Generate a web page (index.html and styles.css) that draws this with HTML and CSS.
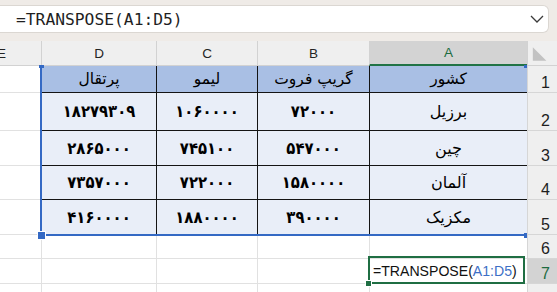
FILE: index.html
```html
<!DOCTYPE html>
<html lang="fa">
<head>
<meta charset="utf-8">
<link rel="stylesheet" href="styles.css">
</head>
<body>
<div class="fbar">
  <div class="fbox">
    <span class="ftext">=TRANSPOSE(A1:D5)</span>
    <svg class="chev" width="14" height="8" viewBox="0 0 14 8"><path d="M1 1 L7 7 L13 1" fill="none" stroke="#3a3a3a" stroke-width="1.3"/></svg>
  </div>
</div>
<div class="sheet">
  <div class="c h corner"><svg width="30" height="25" viewBox="0 0 30 25"><polygon points="5,6 5,20 19,20" fill="#c2c2c2"/></svg></div>
  <div class="c h sel">A</div>
  <div class="c h">B</div>
  <div class="c h">C</div>
  <div class="c h">D</div>
  <div class="c h e"><span class="elet">E</span></div>

  <div class="c r">1</div>
  <div class="c t th">کشور</div>
  <div class="c t th">گریپ فروت</div>
  <div class="c t th">لیمو</div>
  <div class="c t th">پرتقال</div>
  <div class="c e"></div>

  <div class="c r">2</div>
  <div class="c t w">برزیل</div>
  <div class="c t n">۷۲۰۰۰</div>
  <div class="c t n">۱۰۶۰۰۰۰</div>
  <div class="c t n">۱۸۲۷۹۳۰۹</div>
  <div class="c e"></div>

  <div class="c r">3</div>
  <div class="c t w">چین</div>
  <div class="c t n">۵۴۷۰۰۰</div>
  <div class="c t n">۷۴۵۱۰۰</div>
  <div class="c t n">۲۸۶۵۰۰۰</div>
  <div class="c e"></div>

  <div class="c r">4</div>
  <div class="c t w">آلمان</div>
  <div class="c t n">۱۵۸۰۰۰۰</div>
  <div class="c t n">۷۲۲۰۰۰</div>
  <div class="c t n">۷۳۵۷۰۰۰</div>
  <div class="c e"></div>

  <div class="c r">5</div>
  <div class="c t w">مکزیک</div>
  <div class="c t n">۳۹۰۰۰۰</div>
  <div class="c t n">۱۸۸۰۰۰۰</div>
  <div class="c t n">۴۱۶۰۰۰۰</div>
  <div class="c e"></div>

  <div class="c r">6</div>
  <div class="c"></div>
  <div class="c"></div>
  <div class="c"></div>
  <div class="c"></div>
  <div class="c e"></div>

  <div class="c r rsel">7</div>
  <div class="c f">=TRANSPOSE(<span class="ref">A1:D5</span>)</div>
  <div class="c"></div>
  <div class="c"></div>
  <div class="c"></div>
  <div class="c e"></div>

  <div class="c r">8</div>
  <div class="c"></div>
  <div class="c"></div>
  <div class="c"></div>
  <div class="c"></div>
  <div class="c e"></div>

  <div class="selbox"></div>
  <span class="hd hd-tl"></span>
  <span class="hd hd-tr"></span>
  <span class="hd hd-br"></span>
  <span class="hd hd-bl"></span>
  <div class="active"></div>
  <span class="ahd"></span>
</div>
</body>
</html>
```
FILE: styles.css
```css
body {
  margin: 0;
  width: 557px;
  height: 292px;
  overflow: hidden;
  background: #ffffff;
  font-family: "Liberation Sans", Arial, sans-serif;
}

.fbar {
  background: #efebe7;
  height: 41px;
  box-sizing: border-box;
  padding: 5px 8px 8px 0;
}

.fbox {
  height: 28px;
  box-sizing: border-box;
  background: #ffffff;
  border: 1px solid #dbd7d2;
  border-left: none;
  border-radius: 0 6px 6px 0;
  display: flex;
  align-items: center;
  justify-content: space-between;
  padding: 0 4px 0 16px;
}

.ftext {
  font-family: "DejaVu Sans Mono", monospace;
  font-size: 16.3px;
  color: #1f1f1f;
  white-space: pre;
}

.chev {
  display: block;
}

.sheet {
  position: relative;
  display: grid;
  direction: rtl;
  grid-template-columns: 30px 158px 112px 101px 115px 41px;
  grid-template-rows: 25px 27px 38px 35px 34px 35px 24px 25px 25px;
  height: 251px;
  overflow: hidden;
}

.c {
  box-sizing: border-box;
  border-left: 1px solid #e1e1e1;
  border-bottom: 1px solid #e1e1e1;
  display: flex;
  align-items: center;
  justify-content: center;
  white-space: nowrap;
  overflow: hidden;
}

.c.e {
  border-left: none;
}

.h {
  background: #efefef;
  border-color: #d2d2d2;
  font-size: 13.5px;
  color: #242424;
}

.h.sel {
  background: #d3d3d3;
  color: #1d6b3f;
  border-bottom: 2px solid #217346;
}

.h.corner {
  padding: 0;
  align-items: stretch;
}

.h.e {
  justify-content: flex-end;
}

.elet {
  margin-left: -3px;
  direction: ltr;
}

.r {
  background: #efefef;
  border-color: #d6d6d6;
  font-size: 16px;
  color: #1e1e1e;
  align-items: flex-end;
  padding-left: 6px;
  line-height: 18px;
}

.r.rsel {
  background: #d3d3d3;
  color: #1d6b3f;
}

.t {
  background: #e9eef8;
  border-color: #141414;
  color: #000000;
}

.th {
  background: #a9bfe4;
  font-family: "DejaVu Sans", sans-serif;
  font-size: 15.5px;
}

.w {
  font-family: "DejaVu Sans", sans-serif;
  font-size: 16px;
}

.n {
  font-family: "DejaVu Sans Condensed", "DejaVu Sans", sans-serif;
  font-stretch: condensed;
  font-weight: bold;
  font-size: 16.5px;
}

.f {
  direction: ltr;
  justify-content: flex-start;
  padding-left: 3px;
  font-size: 14.1px;
  color: #111111;
  line-height: 18px;
  overflow: visible;
}

.ref {
  color: #3d6fc6;
}

.selbox {
  position: absolute;
  left: 40px;
  top: 25px;
  width: 487px;
  height: 170px;
  box-sizing: border-box;
  border-left: 2px solid #3469c4;
  border-bottom: 2px solid #3469c4;
  pointer-events: none;
}

.hd {
  position: absolute;
  background: #3469c4;
}

.hd-tl {
  left: 39px;
  top: 24px;
  width: 5px;
  height: 3px;
}

.hd-tr {
  left: 524px;
  top: 24px;
  width: 3px;
  height: 3px;
}

.hd-br {
  left: 524px;
  top: 192px;
  width: 3px;
  height: 5px;
}

.hd-bl {
  left: 37px;
  top: 190px;
  width: 7px;
  height: 7px;
  border: 1px solid #ffffff;
}

.active {
  position: absolute;
  left: 368px;
  top: 215px;
  width: 157px;
  height: 28px;
  box-sizing: border-box;
  border: 2px solid #1f6e43;
  pointer-events: none;
}

.ahd {
  position: absolute;
  left: 365px;
  top: 239px;
  width: 5px;
  height: 5px;
  background: #1f6e43;
  border: 1px solid #ffffff;
}
```
